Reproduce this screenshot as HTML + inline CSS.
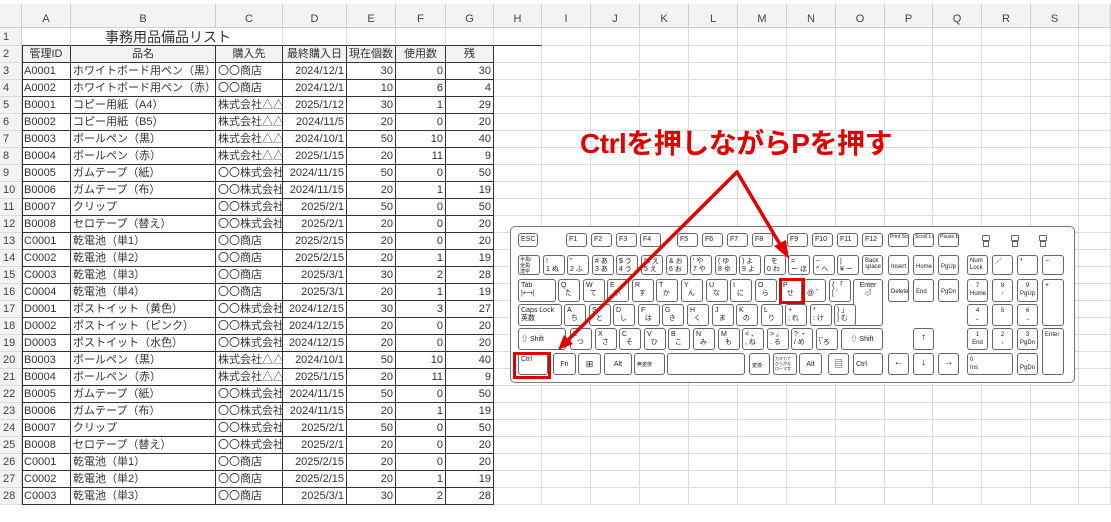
<!DOCTYPE html>
<html><head><meta charset="utf-8"><style>
*{margin:0;padding:0;box-sizing:border-box}
body{width:1111px;height:522px;overflow:hidden;background:#fff;font-family:"Liberation Sans","Noto Sans CJK JP",sans-serif;position:relative}
table{position:absolute;left:0;top:4px;width:1111px;border-collapse:separate;border-spacing:0;table-layout:fixed;font-size:11px;color:#333}
td{border-right:1px solid #dadada;border-bottom:1px solid #dadada;height:17px;padding:0 2px;white-space:nowrap;overflow:hidden;line-height:16px}
tr.h td{background:#f3f3f3;text-align:center;color:#444;height:24px;border-color:#cfcfcf;padding-top:6px}
td.r{background:#f3f3f3;color:#444;border-right:1px solid #cfcfcf;border-bottom:1px solid #dcdcdc;font-size:11px;padding-left:3px}
tr.t1 td{height:18px}
tr.d td:nth-child(n+2):nth-child(-n+8){border-right:1px solid #333;border-bottom:1px solid #333}
tr.t1 td:nth-child(n+2):nth-child(-n+8){border-bottom:1px solid #333}
tr.d td:nth-child(2){box-shadow:inset 1px 0 #333}
tr.g td:nth-child(n+2):nth-child(-n+8){background:#f2f2f2;text-align:center}
tr.d td:nth-child(n+6):nth-child(-n+8),tr.d td:nth-child(5){text-align:right}
tr.g td:nth-child(n+5){text-align:center!important}
.kb{position:absolute;left:510px;top:226px;width:565px;height:157px;border:1.5px solid #777;border-radius:5px;background:#fff}
.k{position:absolute;border:1.3px solid #666;border-radius:3px;background:#fff;font-size:7px;line-height:8px;padding:2px 2px;color:#222;overflow:hidden;white-space:nowrap}
.red{position:absolute;border:3px solid #e00000}
.title{position:absolute;left:560px;top:122px;width:352px;text-align:center;font-size:28px;font-weight:bold;color:#e00000;letter-spacing:-0.5px}
</style></head><body>
<table>
<colgroup><col style="width:22px"><col style="width:49px"><col style="width:145px"><col style="width:67px"><col style="width:64px"><col style="width:49px"><col style="width:50px"><col style="width:48px"><col style="width:48px"><col style="width:49px"><col style="width:49px"><col style="width:49px"><col style="width:49px"><col style="width:49px"><col style="width:49px"><col style="width:49px"><col style="width:48px"><col style="width:49px"><col style="width:49px"><col style="width:48px"><col style="width:32px"></colgroup>
<tr class="h"><td></td><td>A</td><td>B</td><td>C</td><td>D</td><td>E</td><td>F</td><td>G</td><td>H</td><td>I</td><td>J</td><td>K</td><td>L</td><td>M</td><td>N</td><td>O</td><td>P</td><td>Q</td><td>R</td><td>S</td><td></td></tr>
<tr class="t1"><td class="r">1</td><td></td><td colspan="2" style="text-align:left;font-size:14px;padding-left:34px">事務用品備品リスト</td><td></td><td></td><td></td><td></td><td></td><td></td><td></td><td></td><td></td><td></td><td></td><td></td><td></td><td></td><td></td><td></td><td></td></tr>
<tr class="d g"><td class="r">2</td><td>管理ID</td><td>品名</td><td>購入先</td><td>最終購入日</td><td>現在個数</td><td>使用数</td><td>残</td><td></td><td></td><td></td><td></td><td></td><td></td><td></td><td></td><td></td><td></td><td></td><td></td><td></td></tr>
<tr class="d"><td class="r">3</td><td>A0001</td><td>ホワイトボード用ペン（黒）</td><td>〇〇商店</td><td>2024/12/1</td><td>30</td><td>0</td><td>30</td><td></td><td></td><td></td><td></td><td></td><td></td><td></td><td></td><td></td><td></td><td></td><td></td><td></td></tr>
<tr class="d"><td class="r">4</td><td>A0002</td><td>ホワイトボード用ペン（赤）</td><td>〇〇商店</td><td>2024/12/1</td><td>10</td><td>6</td><td>4</td><td></td><td></td><td></td><td></td><td></td><td></td><td></td><td></td><td></td><td></td><td></td><td></td><td></td></tr>
<tr class="d"><td class="r">5</td><td>B0001</td><td>コピー用紙（A4）</td><td>株式会社△△</td><td>2025/1/12</td><td>30</td><td>1</td><td>29</td><td></td><td></td><td></td><td></td><td></td><td></td><td></td><td></td><td></td><td></td><td></td><td></td><td></td></tr>
<tr class="d"><td class="r">6</td><td>B0002</td><td>コピー用紙（B5）</td><td>株式会社△△</td><td>2024/11/5</td><td>20</td><td>0</td><td>20</td><td></td><td></td><td></td><td></td><td></td><td></td><td></td><td></td><td></td><td></td><td></td><td></td><td></td></tr>
<tr class="d"><td class="r">7</td><td>B0003</td><td>ボールペン（黒）</td><td>株式会社△△</td><td>2024/10/1</td><td>50</td><td>10</td><td>40</td><td></td><td></td><td></td><td></td><td></td><td></td><td></td><td></td><td></td><td></td><td></td><td></td><td></td></tr>
<tr class="d"><td class="r">8</td><td>B0004</td><td>ボールペン（赤）</td><td>株式会社△△</td><td>2025/1/15</td><td>20</td><td>11</td><td>9</td><td></td><td></td><td></td><td></td><td></td><td></td><td></td><td></td><td></td><td></td><td></td><td></td><td></td></tr>
<tr class="d"><td class="r">9</td><td>B0005</td><td>ガムテープ（紙）</td><td>〇〇株式会社</td><td>2024/11/15</td><td>50</td><td>0</td><td>50</td><td></td><td></td><td></td><td></td><td></td><td></td><td></td><td></td><td></td><td></td><td></td><td></td><td></td></tr>
<tr class="d"><td class="r">10</td><td>B0006</td><td>ガムテープ（布）</td><td>〇〇株式会社</td><td>2024/11/15</td><td>20</td><td>1</td><td>19</td><td></td><td></td><td></td><td></td><td></td><td></td><td></td><td></td><td></td><td></td><td></td><td></td><td></td></tr>
<tr class="d"><td class="r">11</td><td>B0007</td><td>クリップ</td><td>〇〇株式会社</td><td>2025/2/1</td><td>50</td><td>0</td><td>50</td><td></td><td></td><td></td><td></td><td></td><td></td><td></td><td></td><td></td><td></td><td></td><td></td><td></td></tr>
<tr class="d"><td class="r">12</td><td>B0008</td><td>セロテープ（替え）</td><td>〇〇株式会社</td><td>2025/2/1</td><td>20</td><td>0</td><td>20</td><td></td><td></td><td></td><td></td><td></td><td></td><td></td><td></td><td></td><td></td><td></td><td></td><td></td></tr>
<tr class="d"><td class="r">13</td><td>C0001</td><td>乾電池（単1）</td><td>〇〇商店</td><td>2025/2/15</td><td>20</td><td>0</td><td>20</td><td></td><td></td><td></td><td></td><td></td><td></td><td></td><td></td><td></td><td></td><td></td><td></td><td></td></tr>
<tr class="d"><td class="r">14</td><td>C0002</td><td>乾電池（単2）</td><td>〇〇商店</td><td>2025/2/15</td><td>20</td><td>1</td><td>19</td><td></td><td></td><td></td><td></td><td></td><td></td><td></td><td></td><td></td><td></td><td></td><td></td><td></td></tr>
<tr class="d"><td class="r">15</td><td>C0003</td><td>乾電池（単3）</td><td>〇〇商店</td><td>2025/3/1</td><td>30</td><td>2</td><td>28</td><td></td><td></td><td></td><td></td><td></td><td></td><td></td><td></td><td></td><td></td><td></td><td></td><td></td></tr>
<tr class="d"><td class="r">16</td><td>C0004</td><td>乾電池（単4）</td><td>〇〇商店</td><td>2025/3/1</td><td>20</td><td>1</td><td>19</td><td></td><td></td><td></td><td></td><td></td><td></td><td></td><td></td><td></td><td></td><td></td><td></td><td></td></tr>
<tr class="d"><td class="r">17</td><td>D0001</td><td>ポストイット（黄色）</td><td>〇〇株式会社</td><td>2024/12/15</td><td>30</td><td>3</td><td>27</td><td></td><td></td><td></td><td></td><td></td><td></td><td></td><td></td><td></td><td></td><td></td><td></td><td></td></tr>
<tr class="d"><td class="r">18</td><td>D0002</td><td>ポストイット（ピンク）</td><td>〇〇株式会社</td><td>2024/12/15</td><td>20</td><td>0</td><td>20</td><td></td><td></td><td></td><td></td><td></td><td></td><td></td><td></td><td></td><td></td><td></td><td></td><td></td></tr>
<tr class="d"><td class="r">19</td><td>D0003</td><td>ポストイット（水色）</td><td>〇〇株式会社</td><td>2024/12/15</td><td>20</td><td>0</td><td>20</td><td></td><td></td><td></td><td></td><td></td><td></td><td></td><td></td><td></td><td></td><td></td><td></td><td></td></tr>
<tr class="d"><td class="r">20</td><td>B0003</td><td>ボールペン（黒）</td><td>株式会社△△</td><td>2024/10/1</td><td>50</td><td>10</td><td>40</td><td></td><td></td><td></td><td></td><td></td><td></td><td></td><td></td><td></td><td></td><td></td><td></td><td></td></tr>
<tr class="d"><td class="r">21</td><td>B0004</td><td>ボールペン（赤）</td><td>株式会社△△</td><td>2025/1/15</td><td>20</td><td>11</td><td>9</td><td></td><td></td><td></td><td></td><td></td><td></td><td></td><td></td><td></td><td></td><td></td><td></td><td></td></tr>
<tr class="d"><td class="r">22</td><td>B0005</td><td>ガムテープ（紙）</td><td>〇〇株式会社</td><td>2024/11/15</td><td>50</td><td>0</td><td>50</td><td></td><td></td><td></td><td></td><td></td><td></td><td></td><td></td><td></td><td></td><td></td><td></td><td></td></tr>
<tr class="d"><td class="r">23</td><td>B0006</td><td>ガムテープ（布）</td><td>〇〇株式会社</td><td>2024/11/15</td><td>20</td><td>1</td><td>19</td><td></td><td></td><td></td><td></td><td></td><td></td><td></td><td></td><td></td><td></td><td></td><td></td><td></td></tr>
<tr class="d"><td class="r">24</td><td>B0007</td><td>クリップ</td><td>〇〇株式会社</td><td>2025/2/1</td><td>50</td><td>0</td><td>50</td><td></td><td></td><td></td><td></td><td></td><td></td><td></td><td></td><td></td><td></td><td></td><td></td><td></td></tr>
<tr class="d"><td class="r">25</td><td>B0008</td><td>セロテープ（替え）</td><td>〇〇株式会社</td><td>2025/2/1</td><td>20</td><td>0</td><td>20</td><td></td><td></td><td></td><td></td><td></td><td></td><td></td><td></td><td></td><td></td><td></td><td></td><td></td></tr>
<tr class="d"><td class="r">26</td><td>C0001</td><td>乾電池（単1）</td><td>〇〇商店</td><td>2025/2/15</td><td>20</td><td>0</td><td>20</td><td></td><td></td><td></td><td></td><td></td><td></td><td></td><td></td><td></td><td></td><td></td><td></td><td></td></tr>
<tr class="d"><td class="r">27</td><td>C0002</td><td>乾電池（単2）</td><td>〇〇商店</td><td>2025/2/15</td><td>20</td><td>1</td><td>19</td><td></td><td></td><td></td><td></td><td></td><td></td><td></td><td></td><td></td><td></td><td></td><td></td><td></td></tr>
<tr class="d"><td class="r">28</td><td>C0003</td><td>乾電池（単3）</td><td>〇〇商店</td><td>2025/3/1</td><td>30</td><td>2</td><td>28</td><td></td><td></td><td></td><td></td><td></td><td></td><td></td><td></td><td></td><td></td><td></td><td></td><td></td></tr>
</table>

<div class="title">Ctrlを押しながらPを押す</div>

<div class="kb"></div>
<div class="k" style="left:518px;top:233px;width:20px;height:14px">ESC</div>
<div class="k" style="left:566px;top:233px;width:21px;height:14px">F1</div>
<div class="k" style="left:591px;top:233px;width:21px;height:14px">F2</div>
<div class="k" style="left:616px;top:233px;width:21px;height:14px">F3</div>
<div class="k" style="left:640px;top:233px;width:21px;height:14px">F4</div>
<div class="k" style="left:677px;top:233px;width:21px;height:14px">F5</div>
<div class="k" style="left:702px;top:233px;width:21px;height:14px">F6</div>
<div class="k" style="left:727px;top:233px;width:21px;height:14px">F7</div>
<div class="k" style="left:752px;top:233px;width:21px;height:14px">F8</div>
<div class="k" style="left:787px;top:233px;width:21px;height:14px">F9</div>
<div class="k" style="left:812px;top:233px;width:21px;height:14px">F10</div>
<div class="k" style="left:837px;top:233px;width:21px;height:14px">F11</div>
<div class="k" style="left:862px;top:233px;width:21px;height:14px">F12</div>
<div class="k" style="left:888px;top:233px;width:21px;height:14px;font-size:5px;line-height:5px;padding:1px">Print Screen</div>
<div class="k" style="left:913px;top:233px;width:21px;height:14px;font-size:5px;line-height:5px;padding:1px">Scroll Lock</div>
<div class="k" style="left:938px;top:233px;width:21px;height:14px;font-size:5px;line-height:5px;padding:1px">Pause Break</div>
<div class="k" style="left:982px;top:235px;width:8px;height:4px;border-radius:1px"></div>
<div class="k" style="left:1011px;top:235px;width:8px;height:4px;border-radius:1px"></div>
<div class="k" style="left:1039px;top:235px;width:8px;height:4px;border-radius:1px"></div>
<div class="k" style="left:983px;top:241px;width:6px;height:6px;border-radius:0;border-width:1px"></div>
<div class="k" style="left:1012px;top:241px;width:6px;height:6px;border-radius:0;border-width:1px"></div>
<div class="k" style="left:1040px;top:241px;width:6px;height:6px;border-radius:0;border-width:1px"></div>
<div class="k" style="left:518px;top:255px;width:22px;height:20px;font-size:5px;line-height:6px;padding:1px">半角/<br>全角<br>漢字</div>
<div class="k" style="left:543px;top:255px;width:22px;height:20px">!<br>1 ぬ</div>
<div class="k" style="left:567px;top:255px;width:22px;height:20px">"<br>2 ふ</div>
<div class="k" style="left:592px;top:255px;width:22px;height:20px"># あ<br>3 あ</div>
<div class="k" style="left:616px;top:255px;width:22px;height:20px">$ う<br>4 う</div>
<div class="k" style="left:641px;top:255px;width:22px;height:20px">% え<br>5 え</div>
<div class="k" style="left:666px;top:255px;width:22px;height:20px">&amp; お<br>6 お</div>
<div class="k" style="left:690px;top:255px;width:22px;height:20px">' や<br>7 や</div>
<div class="k" style="left:715px;top:255px;width:22px;height:20px">( ゆ<br>8 ゆ</div>
<div class="k" style="left:739px;top:255px;width:22px;height:20px">) よ<br>9 よ</div>
<div class="k" style="left:764px;top:255px;width:22px;height:20px">&nbsp; を<br>0 わ</div>
<div class="k" style="left:788px;top:255px;width:22px;height:20px">=<br>ー ほ</div>
<div class="k" style="left:813px;top:255px;width:22px;height:20px">~<br>^ へ</div>
<div class="k" style="left:837px;top:255px;width:22px;height:20px">|<br>¥ ー</div>
<div class="k" style="left:862px;top:255px;width:21px;height:20px;font-size:6px;line-height:6px">Back<br>space</div>
<div class="k" style="left:518px;top:279px;width:38px;height:23px">Tab<br>|⟷|</div>
<div class="k" style="left:558px;top:279px;width:22px;height:23px">Q<br>&nbsp;&nbsp;た</div>
<div class="k" style="left:583px;top:279px;width:22px;height:23px">W<br>&nbsp;&nbsp;て</div>
<div class="k" style="left:607px;top:279px;width:22px;height:23px">E<br>&nbsp;&nbsp;い</div>
<div class="k" style="left:632px;top:279px;width:22px;height:23px">R<br>&nbsp;&nbsp;す</div>
<div class="k" style="left:656px;top:279px;width:22px;height:23px">T<br>&nbsp;&nbsp;か</div>
<div class="k" style="left:681px;top:279px;width:22px;height:23px">Y<br>&nbsp;&nbsp;ん</div>
<div class="k" style="left:706px;top:279px;width:22px;height:23px">U<br>&nbsp;&nbsp;な</div>
<div class="k" style="left:730px;top:279px;width:22px;height:23px">I<br>&nbsp;&nbsp;に</div>
<div class="k" style="left:755px;top:279px;width:22px;height:23px">O<br>&nbsp;&nbsp;ら</div>
<div class="k" style="left:780px;top:279px;width:22px;height:23px">P<br>&nbsp;&nbsp;せ</div>
<div class="k" style="left:804px;top:279px;width:22px;height:23px">`<br>@ ゛</div>
<div class="k" style="left:829px;top:279px;width:22px;height:23px">{ 「<br>[ ゜</div>
<div class="k" style="left:853px;top:279px;width:30px;height:47px;text-align:center">Enter<br>⏎</div>
<div class="k" style="left:518px;top:304px;width:44px;height:22px">Caps Lock<br>英数</div>
<div class="k" style="left:564px;top:304px;width:22px;height:22px">A<br>&nbsp;&nbsp;ち</div>
<div class="k" style="left:589px;top:304px;width:22px;height:22px">S<br>&nbsp;&nbsp;と</div>
<div class="k" style="left:613px;top:304px;width:22px;height:22px">D<br>&nbsp;&nbsp;し</div>
<div class="k" style="left:638px;top:304px;width:22px;height:22px">F<br>&nbsp;&nbsp;は</div>
<div class="k" style="left:662px;top:304px;width:22px;height:22px">G<br>&nbsp;&nbsp;き</div>
<div class="k" style="left:687px;top:304px;width:22px;height:22px">H<br>&nbsp;&nbsp;く</div>
<div class="k" style="left:712px;top:304px;width:22px;height:22px">J<br>&nbsp;&nbsp;ま</div>
<div class="k" style="left:736px;top:304px;width:22px;height:22px">K<br>&nbsp;&nbsp;の</div>
<div class="k" style="left:761px;top:304px;width:22px;height:22px">L<br>&nbsp;&nbsp;り</div>
<div class="k" style="left:785px;top:304px;width:22px;height:22px">+<br>; れ</div>
<div class="k" style="left:810px;top:304px;width:22px;height:22px">*<br>: け</div>
<div class="k" style="left:834px;top:304px;width:22px;height:22px">} 」<br>] む</div>
<div class="k" style="left:518px;top:328px;width:48px;height:22px;padding-top:7px">⇧ Shift</div>
<div class="k" style="left:570px;top:328px;width:22px;height:22px">Z<br>&nbsp;&nbsp;つ</div>
<div class="k" style="left:595px;top:328px;width:22px;height:22px">X<br>&nbsp;&nbsp;さ</div>
<div class="k" style="left:619px;top:328px;width:22px;height:22px">C<br>&nbsp;&nbsp;そ</div>
<div class="k" style="left:644px;top:328px;width:22px;height:22px">V<br>&nbsp;&nbsp;ひ</div>
<div class="k" style="left:668px;top:328px;width:22px;height:22px">B<br>&nbsp;&nbsp;こ</div>
<div class="k" style="left:693px;top:328px;width:22px;height:22px">N<br>&nbsp;&nbsp;み</div>
<div class="k" style="left:718px;top:328px;width:22px;height:22px">M<br>&nbsp;&nbsp;も</div>
<div class="k" style="left:742px;top:328px;width:22px;height:22px">&lt; 、<br>, ね</div>
<div class="k" style="left:767px;top:328px;width:22px;height:22px">&gt; 。<br>. る</div>
<div class="k" style="left:791px;top:328px;width:22px;height:22px">? ・<br>/ め</div>
<div class="k" style="left:816px;top:328px;width:22px;height:22px">_<br>\ ろ</div>
<div class="k" style="left:841px;top:328px;width:42px;height:22px;padding-top:7px;text-align:center">⇧ Shift</div>
<div class="k" style="left:518px;top:353px;width:30px;height:22px">Ctrl</div>
<div class="k" style="left:553px;top:353px;width:23px;height:22px;padding-top:7px;text-align:center">Fn</div>
<div class="k" style="left:578px;top:353px;width:23px;height:22px;padding-top:6px;text-align:center;font-size:9px">⊞</div>
<div class="k" style="left:604px;top:353px;width:28px;height:22px;padding-top:7px;text-align:center">Alt</div>
<div class="k" style="left:634px;top:353px;width:31px;height:22px;padding-top:7px;font-size:5px">無変換</div>
<div class="k" style="left:667px;top:353px;width:78px;height:22px"></div>
<div class="k" style="left:749px;top:353px;width:21px;height:22px;padding-top:8px;font-size:5px">変換</div>
<div class="k" style="left:773px;top:353px;width:24px;height:22px;font-size:4px;line-height:5px;padding:2px 1px">カタカナ<br>ひらがな<br>ローマ字</div>
<div class="k" style="left:799px;top:353px;width:23px;height:22px;padding-top:7px;text-align:center">Alt</div>
<div class="k" style="left:828px;top:353px;width:21px;height:22px;padding-top:6px;text-align:center;font-size:9px">▤</div>
<div class="k" style="left:853px;top:353px;width:30px;height:22px;padding-top:7px">Ctrl</div>
<div class="k" style="left:888px;top:255px;width:21px;height:20px;padding-top:7px;font-size:6px">Insert</div>
<div class="k" style="left:913px;top:255px;width:21px;height:20px;padding-top:7px;font-size:6px">Home</div>
<div class="k" style="left:938px;top:255px;width:21px;height:20px;padding-top:7px;font-size:6px">PgUp</div>
<div class="k" style="left:888px;top:279px;width:21px;height:23px;padding-top:8px;font-size:6px">Delete</div>
<div class="k" style="left:913px;top:279px;width:21px;height:23px;padding-top:8px;font-size:6px">End</div>
<div class="k" style="left:938px;top:279px;width:21px;height:23px;padding-top:8px;font-size:6px">PgDn</div>
<div class="k" style="left:913px;top:328px;width:21px;height:22px;padding-top:5px;text-align:center;font-size:10px">↑</div>
<div class="k" style="left:888px;top:353px;width:21px;height:22px;padding-top:5px;text-align:center;font-size:10px">←</div>
<div class="k" style="left:913px;top:353px;width:21px;height:22px;padding-top:5px;text-align:center;font-size:10px">↓</div>
<div class="k" style="left:938px;top:353px;width:21px;height:22px;padding-top:5px;text-align:center;font-size:10px">→</div>
<div class="k" style="left:967px;top:255px;width:21px;height:20px;font-size:6px;line-height:7px">Num<br>Lock</div>
<div class="k" style="left:992px;top:255px;width:21px;height:20px">／</div>
<div class="k" style="left:1017px;top:255px;width:21px;height:20px">*</div>
<div class="k" style="left:1042px;top:255px;width:22px;height:20px">−</div>
<div class="k" style="left:967px;top:279px;width:21px;height:23px;text-align:center;font-size:6px">7<br>Home</div>
<div class="k" style="left:992px;top:279px;width:21px;height:23px;text-align:center;font-size:6px">8<br>↑</div>
<div class="k" style="left:1017px;top:279px;width:21px;height:23px;text-align:center;font-size:6px">9<br>PgUp</div>
<div class="k" style="left:1042px;top:279px;width:22px;height:47px">+</div>
<div class="k" style="left:967px;top:304px;width:21px;height:22px;text-align:center;font-size:6px">4<br>←</div>
<div class="k" style="left:992px;top:304px;width:21px;height:22px;text-align:center;font-size:6px">5</div>
<div class="k" style="left:1017px;top:304px;width:21px;height:22px;text-align:center;font-size:6px">6<br>→</div>
<div class="k" style="left:967px;top:328px;width:21px;height:22px;text-align:center;font-size:6px">1<br>End</div>
<div class="k" style="left:992px;top:328px;width:21px;height:22px;text-align:center;font-size:6px">2<br>↓</div>
<div class="k" style="left:1017px;top:328px;width:21px;height:22px;text-align:center;font-size:6px">3<br>PgDn</div>
<div class="k" style="left:1042px;top:328px;width:22px;height:47px;font-size:6px">Enter</div>
<div class="k" style="left:967px;top:353px;width:46px;height:22px;font-size:6px">0<br>Ins</div>
<div class="k" style="left:1017px;top:353px;width:21px;height:22px;text-align:center;font-size:6px">.<br>PgDn</div>

<div class="red" style="left:779px;top:278px;width:26px;height:26px"></div>
<div class="red" style="left:513px;top:352px;width:38px;height:27px"></div>

<svg style="position:absolute;left:0;top:0" width="1111" height="522">
<g stroke="#e00000" stroke-width="3.5" fill="none" stroke-linecap="round">
<line x1="737" y1="172" x2="781" y2="246"/>
<line x1="737" y1="172" x2="566" y2="342"/>
</g>
<polygon points="789,259 774,246 786,240" fill="#e00000"/>
<polygon points="558,350 564,335 573,344" fill="#e00000"/>
</svg>
</body></html>
